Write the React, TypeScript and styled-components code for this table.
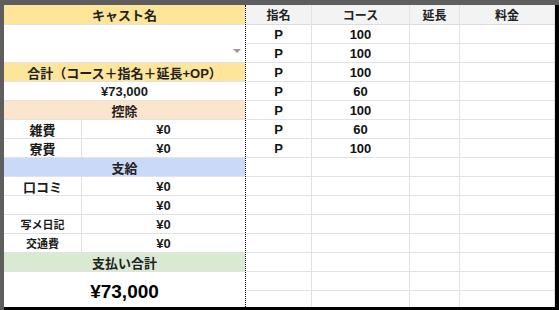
import React from "react";
import styled, { createGlobalStyle } from "styled-components";

const GlobalStyle = createGlobalStyle`
  html, body {
    margin: 0;
    padding: 0;
    background: #ffffff;
  }
  body {
    font-family: "Liberation Sans", "Noto Sans CJK JP", sans-serif;
    color: #1a1a1a;
  }
`;

type LeftRow =
  | { kind: "head"; text: string; bg: string }
  | { kind: "item"; label: string; value: string; small?: boolean }
  | { kind: "single"; text: string };

const topRows: LeftRow[] = [
  { kind: "head", text: "合計（コース＋指名＋延長+OP）", bg: "#ffe599" },
  { kind: "single", text: "¥73,000" },
  { kind: "head", text: "控除", bg: "#fce5cd" },
  { kind: "item", label: "雑費", value: "¥0" },
  { kind: "item", label: "寮費", value: "¥0" },
  { kind: "head", text: "支給", bg: "#c9daf8" },
  { kind: "item", label: "口コミ", value: "¥0" },
  { kind: "item", label: "", value: "¥0" },
  { kind: "item", label: "写メ日記", value: "¥0", small: true },
  { kind: "item", label: "交通費", value: "¥0", small: true },
  { kind: "head", text: "支払い合計", bg: "#d9ead3" },
];

const orders = [
  { shimei: "P", course: "100" },
  { shimei: "P", course: "100" },
  { shimei: "P", course: "100" },
  { shimei: "P", course: "60" },
  { shimei: "P", course: "100" },
  { shimei: "P", course: "60" },
  { shimei: "P", course: "100" },
];

const EMPTY_ROWS = 8;

const App = () => {
  const rows = [
    ...orders,
    ...Array.from({ length: EMPTY_ROWS }, () => ({ shimei: "", course: "" })),
  ];

  return (
    <>
      <GlobalStyle />
      <Frame>
        <Sheet>
          <LeftPanel>
            <HeadRow $bg="#ffe599" $h={20}>キャスト名</HeadRow>
            <DropdownRow>
              <Arrow />
            </DropdownRow>
            {topRows.map((row, i) => {
              if (row.kind === "head") {
                return (
                  <HeadRow key={i} $bg={row.bg} $h={19}>
                    {row.text}
                  </HeadRow>
                );
              }
              if (row.kind === "single") {
                return <SingleRow key={i}>{row.text}</SingleRow>;
              }
              return (
                <ItemRow key={i}>
                  <LabelCell $small={row.small}>{row.label}</LabelCell>
                  <ValueCell>{row.value}</ValueCell>
                </ItemRow>
              );
            })}
            <BigTotal>¥73,000</BigTotal>
          </LeftPanel>

          <RightTable>
            <HeadCell>指名</HeadCell>
            <HeadCell>コース</HeadCell>
            <HeadCell>延長</HeadCell>
            <HeadCell>料金</HeadCell>
            {rows.map((r, i) => (
              <React.Fragment key={i}>
                <DataCell>{r.shimei}</DataCell>
                <DataCell>{r.course}</DataCell>
                <DataCell />
                <DataCell />
              </React.Fragment>
            ))}
          </RightTable>
        </Sheet>
      </Frame>
    </>
  );
};

export default App;

const Frame = styled.div`
  width: 559px;
  height: 310px;
  box-sizing: border-box;
  background: #5e5e5e;
  padding: 5px 0 0 4px;
  overflow: hidden;
`;

const Sheet = styled.div`
  display: flex;
  height: 305px;
  box-sizing: border-box;
  background: #ffffff;
  border-right: 4px solid #000000;
  border-bottom: 3px solid #000000;
  overflow: hidden;
`;

const LeftPanel = styled.div`
  width: 242px;
  flex-shrink: 0;
  display: flex;
  flex-direction: column;
  border-right: 1px dotted #000000;
  box-sizing: border-box;
`;

const HeadRow = styled.div<{ $bg: string; $h: number }>`
  height: ${({ $h }) => $h}px;
  box-sizing: border-box;
  background: ${({ $bg }) => $bg};
  border-bottom: 1px solid #e2e2e2;
  display: flex;
  align-items: center;
  justify-content: center;
  font-size: 13px;
  font-weight: bold;
  color: #222222;
`;

const DropdownRow = styled.div`
  position: relative;
  height: 38px;
  box-sizing: border-box;
  border-bottom: 1px solid #e2e2e2;
`;

const Arrow = styled.span`
  position: absolute;
  right: 4px;
  bottom: 9px;
  width: 0;
  height: 0;
  border-left: 4px solid transparent;
  border-right: 4px solid transparent;
  border-top: 4px solid #9a9a9a;
`;

const SingleRow = styled.div`
  height: 19px;
  box-sizing: border-box;
  border-bottom: 1px solid #e2e2e2;
  display: flex;
  align-items: center;
  justify-content: center;
  font-size: 13px;
  font-weight: bold;
`;

const ItemRow = styled.div`
  height: 19px;
  box-sizing: border-box;
  display: grid;
  grid-template-columns: 78px 1fr;
  border-bottom: 1px solid #e2e2e2;
`;

const LabelCell = styled.div<{ $small?: boolean }>`
  display: flex;
  align-items: center;
  justify-content: center;
  border-right: 1px solid #e2e2e2;
  font-size: ${({ $small }) => ($small ? "11px" : "13px")};
  font-weight: bold;
`;

const ValueCell = styled.div`
  display: flex;
  align-items: center;
  justify-content: center;
  font-size: 13px;
  font-weight: bold;
`;

const BigTotal = styled.div`
  flex: 1;
  display: flex;
  align-items: flex-end;
  justify-content: center;
  padding-bottom: 4px;
  font-size: 19px;
  font-weight: bold;
  color: #000000;
`;

const RightTable = styled.div`
  flex: 1;
  display: grid;
  grid-template-columns: 66px 98px 50px 1fr;
  grid-template-rows: 20px;
  grid-auto-rows: 19px;
  align-content: start;
`;

const HeadCell = styled.div`
  background: #f3f3f3;
  border-bottom: 1px solid #dcdcdc;
  border-right: 1px solid #e2e2e2;
  box-sizing: border-box;
  display: flex;
  align-items: center;
  justify-content: center;
  font-size: 12px;
  font-weight: bold;
  color: #222222;
`;

const DataCell = styled.div`
  border-bottom: 1px solid #e2e2e2;
  border-right: 1px solid #e2e2e2;
  box-sizing: border-box;
  display: flex;
  align-items: center;
  justify-content: center;
  font-size: 13px;
  font-weight: bold;
  color: #111111;
`;
